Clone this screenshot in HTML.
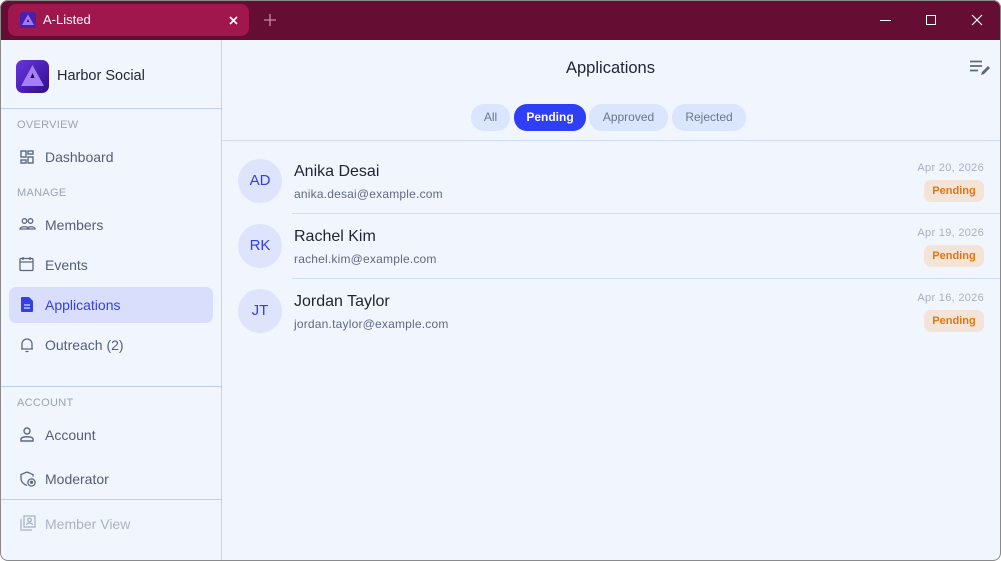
<!DOCTYPE html>
<html><head><style>
*{box-sizing:border-box;margin:0;padding:0}
body{width:1001px;height:561px;font-family:"Liberation Sans",sans-serif;background:#fff;overflow:hidden;position:relative}
.win{position:absolute;left:0;top:0;width:1001px;height:561px;border-radius:8px;overflow:hidden;background:#f1f6fe}
.frame{position:absolute;left:0;top:0;width:1001px;height:561px;border:1px solid #8a8a8a;border-radius:8px}
.title{position:absolute;left:0;top:0;width:100%;height:40px;background:#660d34}
.tab{position:absolute;left:8px;top:4px;width:241px;height:32px;background:#a0174d;border-radius:8px}
.abs{position:absolute}
.side{position:absolute;left:0;top:40px;width:222px;height:521px;border-right:1px solid #c3d3f0}
.hl{position:absolute;height:1px;background:#bcd0f4}
.sec{position:absolute;left:17px;font-size:11px;color:#9aa3b5;letter-spacing:.3px}
.item{position:absolute;left:45px;font-size:14px;color:#525e78}
.ic{position:absolute;left:19px}
.pill{position:absolute;top:104px;height:27px;border-radius:13px;background:#d9e6fd;color:#6b7590;font-size:12px;text-align:center;line-height:27px}
.av{position:absolute;left:238px;width:44px;height:44px;border-radius:50%;background:#dde4fb;color:#3340e8;font-size:15px;text-align:center;line-height:44px}
.nm{position:absolute;left:294px;font-size:16px;color:#1f2433}
.em{position:absolute;left:294px;font-size:12px;color:#5e6a82;letter-spacing:.2px}
.dt{position:absolute;right:17px;font-size:11px;color:#a7afbf;letter-spacing:.3px}
.bd{position:absolute;left:924px;width:60px;height:22px;border-radius:7px;background:#f4e4d8;color:#e0770f;font-size:11px;font-weight:bold;text-align:center;line-height:22px}
</style></head><body><div class="win">
<div class="title">
 <div class="tab">
  <svg class="abs" style="left:12px;top:8px" width="16" height="16" viewBox="0 0 16 16"><rect width="16" height="16" rx="3" fill="#4b1fae"/><path d="M8 2.5L14 13H2z" fill="#a07af5"/><path d="M8 7l1.2 3H6.8z" fill="#2a0d5e"/></svg>
  <div class="abs" style="left:35px;top:8px;color:#fff;font-size:13px">A-Listed</div>
  <svg class="abs" style="left:221px;top:12px" width="9" height="9"><path d="M1 1L8 8M8 1L1 8" stroke="#fff" stroke-width="1.6"/></svg>
 </div>
 <svg class="abs" style="left:264px;top:14px" width="12" height="12"><path d="M6 0v12M0 6h12" stroke="#c58aa2" stroke-width="1.3"/></svg>
 <div class="abs" style="left:880px;top:20px;width:11px;height:1px;background:#fff"></div>
 <div class="abs" style="left:926px;top:15px;width:10px;height:10px;border:1px solid #fff"></div>
 <svg class="abs" style="left:971px;top:14px" width="12" height="12"><path d="M1 1L11 11M11 1L1 11" stroke="#fff" stroke-width="1.2"/></svg>
</div>
<div class="side">
 <svg class="abs" style="left:16px;top:20px" width="33" height="33" viewBox="0 0 33 33"><defs><linearGradient id="g" x1="0" y1="0" x2="1" y2="1"><stop offset="0" stop-color="#6a35e0"/><stop offset="1" stop-color="#2e0f8a"/></linearGradient></defs><rect width="33" height="33" rx="7" fill="url(#g)"/><path d="M16.5 5L28 26H5z" fill="#a47ff7"/><path d="M16.5 13l2 5h-4z" fill="#1e0a55"/></svg>
 <div class="abs" style="left:57px;top:28px;font-size:14.5px;color:#1f2433">Harbor Social</div>
 <div class="hl" style="left:0;top:68px;width:221px"></div>
 <div class="sec" style="top:79px">OVERVIEW</div>
 <svg class="ic" style="top:110px;left:20px" width="14" height="14" viewBox="0 0 14 14" fill="none" stroke="#5c6780" stroke-width="1.4"><rect x="1" y="1" width="5" height="6"/><rect x="8" y="1" width="5" height="3"/><rect x="1" y="10" width="5" height="3"/><rect x="8" y="7" width="5" height="6"/></svg>
 <div class="item" style="top:109px">Dashboard</div>
 <div class="sec" style="top:147px">MANAGE</div>
 <svg class="ic" style="top:177px" width="17" height="14" viewBox="0 0 17 14" fill="none" stroke="#5c6780" stroke-width="1.3"><circle cx="5.5" cy="4" r="2.3"/><circle cx="11.5" cy="4" r="2.3"/><path d="M1 12c0-3 9-3 9 0zM8 12c0-3 8-3 8 0z"/></svg>
 <div class="item" style="top:177px">Members</div>
 <svg class="ic" style="top:216px" width="15" height="16" viewBox="0 0 15 16" fill="none" stroke="#5c6780" stroke-width="1.3"><rect x="1" y="2.5" width="13" height="12" rx="1"/><path d="M1 6h13M4 1v3M11 1v3"/></svg>
 <div class="item" style="top:217px">Events</div>
 <div class="abs" style="left:9px;top:247px;width:204px;height:36px;border-radius:7px;background:#d8defb"></div>
 <svg class="ic" style="top:257px;left:21px" width="12" height="15" viewBox="0 0 12 15"><path d="M1 0h7l4 4v10a1 1 0 0 1-1 1H1a1 1 0 0 1-1-1V1a1 1 0 0 1 1-1z" fill="#3440e6"/><path d="M3 8h6M3 11h6" stroke="#d8defb" stroke-width="1.2"/></svg>
 <div class="item" style="top:257px;color:#3340e8">Applications</div>
 <svg class="ic" style="top:297px;left:20px" width="14" height="16" viewBox="0 0 14 16" fill="none" stroke="#5c6780" stroke-width="1.3"><path d="M2 12V7a5 5 0 0 1 10 0v5zM1 12h12M5.5 14.5h3"/></svg>
 <div class="item" style="top:297px">Outreach (2)</div>
 <div class="hl" style="left:0;top:346px;width:221px"></div>
 <div class="sec" style="top:357px">ACCOUNT</div>
 <svg class="ic" style="top:387px;left:20px" width="14" height="15" viewBox="0 0 14 15" fill="none" stroke="#5c6780" stroke-width="1.4"><circle cx="7" cy="4" r="3"/><path d="M1 14v-2c0-3 12-3 12 0v2z"/></svg>
 <div class="item" style="top:387px">Account</div>
 <svg class="ic" style="top:431px;left:20px" width="17" height="17" viewBox="0 0 17 17" fill="none" stroke="#5c6780" stroke-width="1.3"><path d="M7 1L1 3.5v4c0 3.5 3 6 6 7"/><path d="M7 1l6 2.5v2"/><circle cx="11.5" cy="11.5" r="3.6"/><circle cx="11.5" cy="11.3" r="1" fill="#5c6780"/></svg>
 <div class="item" style="top:431px">Moderator</div>
 <div class="hl" style="left:0;top:459px;width:221px"></div>
 <svg class="ic" style="top:475px;left:20px" width="16" height="16" viewBox="0 0 16 16" fill="none" stroke="#aab3c4" stroke-width="1.3"><rect x="4" y="1" width="11" height="11"/><path d="M1 4v11h11"/><circle cx="9.5" cy="5" r="1.8"/><path d="M6.5 10c0-2.5 6-2.5 6 0"/></svg>
 <div class="item" style="top:476px;color:#aab3c4">Member View</div>
</div>
<div class="abs" style="left:566px;top:59px;font-size:16.5px;color:#1f2433">Applications</div>
<svg class="abs" style="left:970px;top:60px" width="21" height="17" viewBox="0 0 21 17"><path d="M0 1.5h12M0 6h12M0 10.5h8" stroke="#5c6780" stroke-width="1.8"/><path d="M11 15l1-3 6-6 2 2-6 6z" fill="#5c6780"/></svg>
<div class="pill" style="left:471px;width:39px">All</div>
<div class="pill" style="left:514px;width:72px;background:#2f3ff5;color:#fff;font-weight:bold">Pending</div>
<div class="pill" style="left:589px;width:79px">Approved</div>
<div class="pill" style="left:672px;width:74px">Rejected</div>
<div class="hl" style="left:222px;top:140px;width:779px;background:#cfdcf3"></div>
<div class="av" style="top:159px">AD</div>
<div class="nm" style="top:163px">Anika Desai</div>
<div class="em" style="top:187px">anika.desai@example.com</div>
<div class="dt" style="top:162px">Apr 20, 2026</div>
<div class="bd" style="top:180px">Pending</div>
<div class="hl" style="left:292px;top:213px;width:709px;background:#cfdcf3"></div>
<div class="av" style="top:224px">RK</div>
<div class="nm" style="top:228px">Rachel Kim</div>
<div class="em" style="top:252px">rachel.kim@example.com</div>
<div class="dt" style="top:227px">Apr 19, 2026</div>
<div class="bd" style="top:245px">Pending</div>
<div class="hl" style="left:292px;top:278px;width:709px;background:#cfdcf3"></div>
<div class="av" style="top:289px">JT</div>
<div class="nm" style="top:293px">Jordan Taylor</div>
<div class="em" style="top:317px">jordan.taylor@example.com</div>
<div class="dt" style="top:292px">Apr 16, 2026</div>
<div class="bd" style="top:310px">Pending</div>
</div><div class="frame"></div></body></html>
